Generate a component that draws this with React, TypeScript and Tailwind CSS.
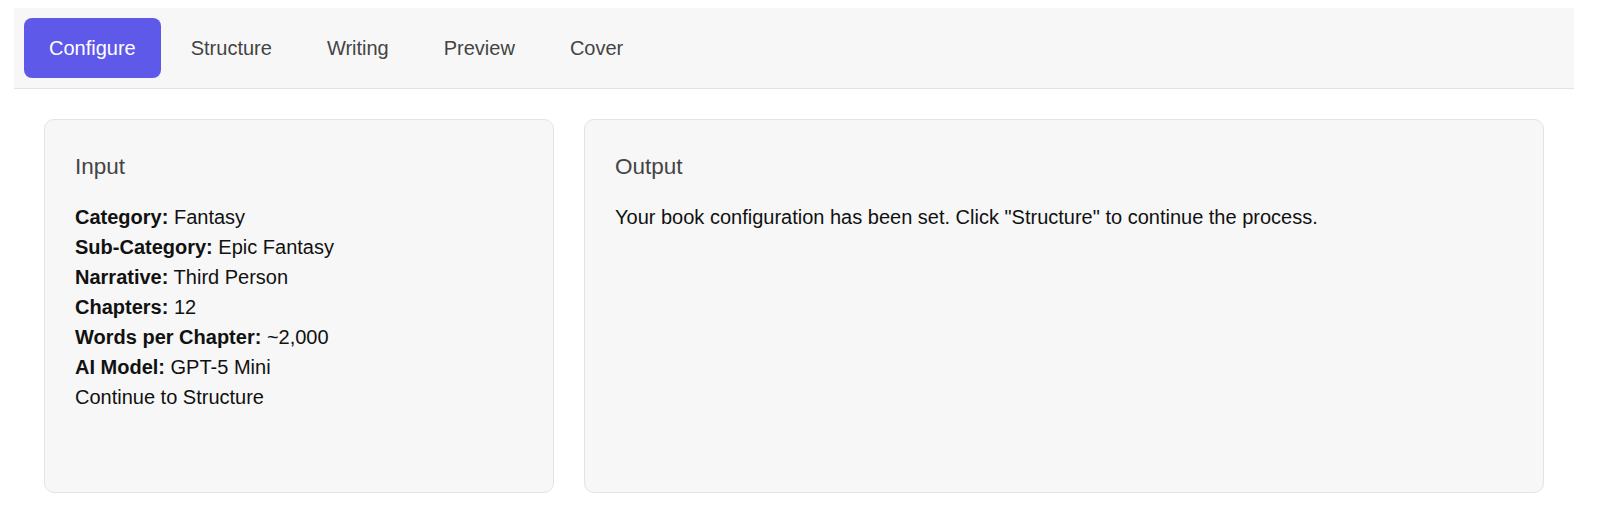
import React from "react";

const Tabs = ["Configure", "Structure", "Writing", "Preview", "Cover"];

const InputRows = [
  { label: "Category:", value: "Fantasy" },
  { label: "Sub-Category:", value: "Epic Fantasy" },
  { label: "Narrative:", value: "Third Person" },
  { label: "Chapters:", value: "12" },
  { label: "Words per Chapter:", value: "~2,000" },
  { label: "AI Model:", value: "GPT-5 Mini" },
];

export default function App() {
  return (
    <div className="min-h-[527px] bg-white pt-[8px] font-['Liberation_Sans',Arial,sans-serif] text-[#111]">
      <div className="ml-[14px] w-[1560px]">
        <nav className="flex gap-[5px] border-b border-[#e2e2e2] bg-[#f7f7f7] p-[10px]">
          {Tabs.map((tab, i) => (
            <button
              key={tab}
              className={
                i === 0
                  ? "rounded-[8px] bg-[#5f59ea] px-[25px] py-[15px] text-[20px] leading-[30px] text-white"
                  : "rounded-[8px] px-[25px] py-[15px] text-[20px] leading-[30px] text-[#444]"
              }
            >
              {tab}
            </button>
          ))}
        </nav>

        <main className="flex gap-[30px] p-[30px]">
          <section className="h-[374px] w-[510px] rounded-[10px] border border-[#e3e3e3] bg-[#f7f7f7] p-[30px]">
            <h3 className="mb-[18px] text-[22.5px] leading-[34px] text-[#444]">Input</h3>
            <div className="text-[20px] leading-[30px]">
              {InputRows.map((row) => (
                <div key={row.label}>
                  <strong className="font-bold">{row.label}</strong> {row.value}
                </div>
              ))}
              <div>Continue to Structure</div>
            </div>
          </section>

          <section className="h-[374px] flex-1 rounded-[10px] border border-[#e3e3e3] bg-[#f7f7f7] p-[30px]">
            <h3 className="mb-[18px] text-[22.5px] leading-[34px] text-[#444]">Output</h3>
            <p className="text-[20px] leading-[30px]">
              Your book configuration has been set. Click "Structure" to continue the process.
            </p>
          </section>
        </main>
      </div>
    </div>
  );
}
